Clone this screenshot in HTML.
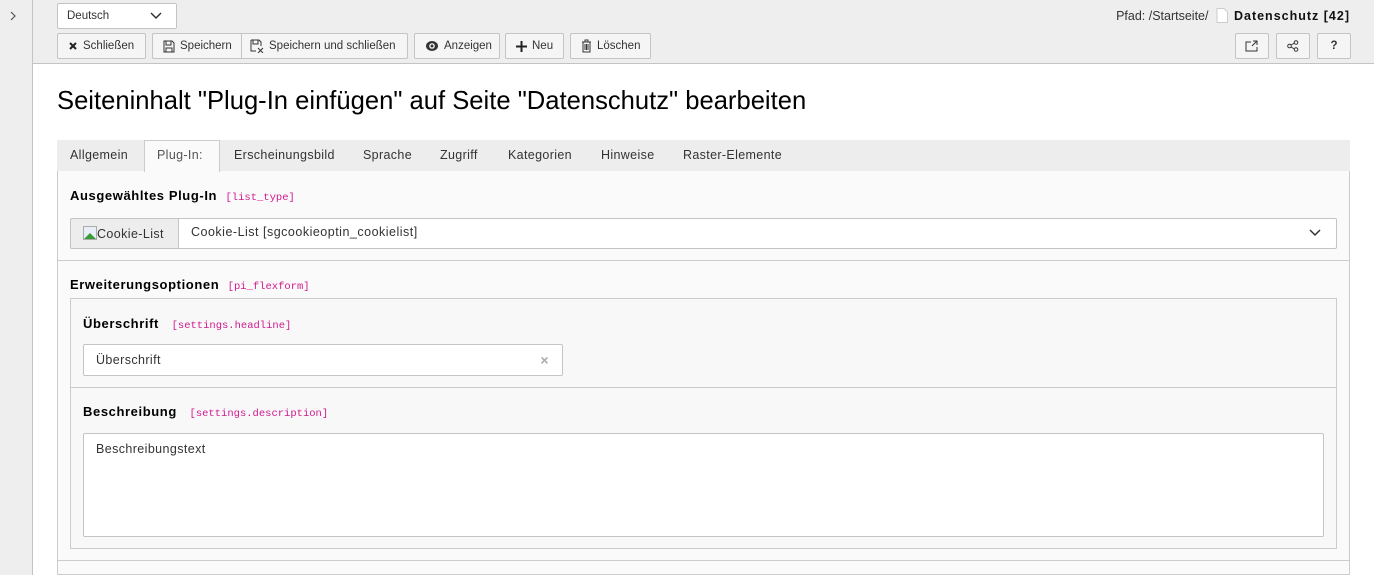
<!DOCTYPE html>
<html><head><meta charset="utf-8"><style>
*{box-sizing:border-box;margin:0;padding:0}
body{width:1374px;height:575px;overflow:hidden;background:#fff;font-family:"Liberation Sans",sans-serif;font-size:12px;color:#333;position:relative}
.a{position:absolute}
.side{left:0;top:0;width:33px;height:575px;background:#eee;border-right:1px solid #c3c3c3}
.top{left:33px;top:0;right:0;height:64px;background:#eee;border-bottom:1px solid #c3c3c3}
.btn{position:absolute;top:33px;height:26px;background:#f5f5f5;border:1px solid #c4c4c4;border-radius:2px;font-size:11.5px;color:#333;display:flex;align-items:center;padding-left:10px;white-space:nowrap}
.btn svg{margin-right:5px}
.mono{font-family:"Liberation Mono",monospace;color:#d1198e;font-size:10.5px;font-weight:normal;letter-spacing:0}
.lbl{position:absolute;font-weight:bold;font-size:13px;letter-spacing:.6px;color:#000}
.tab{position:absolute;top:148px;font-size:12.5px;letter-spacing:.35px;color:#333}
</style></head><body>
<div class="a side"><svg class="a" style="left:9px;top:11px" width="8" height="10"><path d="M2 1l4 4-4 4" fill="none" stroke="#555" stroke-width="1.2"/></svg></div>
<div class="a top"></div>
<div class="a" style="left:57px;top:3px;width:120px;height:26px;background:#fff;border:1px solid #c4c4c4;border-radius:2px;font-size:11.5px;padding:6px 0 0 9px">Deutsch<svg class="a" style="left:92px;top:8px" width="12" height="8"><path d="M1 1l5 5 5-5" fill="none" stroke="#333" stroke-width="1.5"/></svg></div>
<div class="btn" style="left:57px;width:89px"><svg width="10" height="10"><path d="M2 2l6 6M8 2l-6 6" stroke="#222" stroke-width="2"/></svg>Schließen</div>
<div class="btn" style="left:152px;width:90px;border-radius:2px 0 0 2px"><svg width="12" height="13"><path d="M1 1h8l2 2v9H1z M3 1v4h5V1 M3 12V8h6v4" fill="none" stroke="#333"/></svg>Speichern</div>
<div class="btn" style="left:241px;width:167px;border-radius:0 2px 2px 0;padding-left:8px"><svg width="14" height="14"><path d="M1 1h8l2 2v4 M1 1v11h5 M3 1v4h5V1 M8 9l5 5M13 9l-5 5" fill="none" stroke="#333"/></svg>Speichern und schließen</div>
<div class="btn" style="left:414px;width:86px"><svg width="14" height="12"><ellipse cx="7" cy="6" rx="6" ry="5" fill="#333"/><circle cx="7" cy="6" r="2.8" fill="#fff"/><circle cx="7" cy="6" r="1.5" fill="#333"/></svg>Anzeigen</div>
<div class="btn" style="left:505px;width:59px"><svg width="11" height="11"><path d="M5.5 0v11M0 5.5h11" stroke="#222" stroke-width="2"/></svg>Neu</div>
<div class="btn" style="left:570px;width:81px"><svg width="11" height="14"><path d="M1 3h9M4 3V1h3v2M2 3v10h7V3M4 5v6M5.5 5v6M7 5v6" fill="none" stroke="#333"/></svg>Löschen</div>
<div class="a" style="right:24px;top:8px;font-size:12.5px;color:#333">Pfad: /Startseite/ <svg width="12" height="15" style="vertical-align:-3px;margin:0 6px 0 4px"><path d="M1 .5h7l3.5 3.5v10.5H1z" fill="#fff" stroke="#ccc"/></svg><b style="color:#111;letter-spacing:1px">Datenschutz [42]</b></div>
<div class="btn" style="left:1235px;width:34px;padding:0;justify-content:center"><svg width="14" height="12" style="margin:0"><path d="M6 2H1v9h11V7 M8 1h4v4M12 1L7 6" fill="none" stroke="#333"/></svg></div>
<div class="btn" style="left:1276px;width:34px;padding:0;justify-content:center"><svg width="12" height="12" style="margin:0"><circle cx="9" cy="2.5" r="1.8" fill="none" stroke="#333"/><circle cx="2.5" cy="6" r="1.8" fill="none" stroke="#333"/><circle cx="9" cy="9.5" r="1.8" fill="none" stroke="#333"/><path d="M4 5l3.5-2M4 7l3.5 2" stroke="#333"/></svg></div>
<div class="btn" style="left:1317px;width:34px;padding:0;justify-content:center;font-weight:bold">?</div>
<div class="a" style="left:57px;top:87px;font-size:25.6px;color:#000">Seiteninhalt "Plug-In einfügen" auf Seite "Datenschutz" bearbeiten</div>
<div class="a" style="left:57px;top:140px;width:1293px;height:32px;background:#ededed;border-bottom:1px solid #ccc"></div>
<div class="a" style="left:57px;top:171px;width:1293px;height:404px;background:#fafafa;border:1px solid #ccc;border-top:none"></div>
<div class="a" style="left:144px;top:140px;width:76px;height:32px;background:#fafafa;border:1px solid #ccc;border-bottom:none"></div>
<div class="tab" style="left:70px">Allgemein</div>
<div class="tab" style="left:157px;color:#555">Plug-In:</div>
<div class="tab" style="left:234px">Erscheinungsbild</div>
<div class="tab" style="left:363px">Sprache</div>
<div class="tab" style="left:440px">Zugriff</div>
<div class="tab" style="left:508px">Kategorien</div>
<div class="tab" style="left:601px">Hinweise</div>
<div class="tab" style="left:683px">Raster-Elemente</div>
<div class="lbl" style="left:70px;top:188px">Ausgewähltes Plug-In &nbsp;<span class="mono">[list_type]</span></div>
<div class="a" style="left:70px;top:218px;width:1267px;height:31px;background:#fff;border:1px solid #c4c4c4;border-radius:2px"></div>
<div class="a" style="left:70px;top:218px;width:109px;height:31px;background:#ededed;border:1px solid #c4c4c4;border-radius:2px 0 0 2px;font-size:12.5px;letter-spacing:.4px;padding:7px 0 0 12px"><svg width="14" height="14" style="vertical-align:-2px"><rect x=".5" y=".5" width="13" height="13" fill="#e8eef5" stroke="#aaa"/><path d="M1 13L7 7l6 6z" fill="#3a9a3a"/></svg>Cookie-List</div>
<div class="a" style="left:191px;top:225px;font-size:12.5px;letter-spacing:.5px">Cookie-List [sgcookieoptin_cookielist]</div>
<svg class="a" style="left:1309px;top:229px" width="12" height="8"><path d="M1 1l5 5 5-5" fill="none" stroke="#333" stroke-width="1.5"/></svg>
<div class="a" style="left:58px;top:260px;width:1291px;border-top:1px solid #ccc"></div>
<div class="lbl" style="left:70px;top:277px">Erweiterungsoptionen &nbsp;<span class="mono">[pi_flexform]</span></div>
<div class="a" style="left:70px;top:298px;width:1267px;height:251px;border:1px solid #ccc;background:#f8f8f8"></div>
<div class="lbl" style="left:83px;top:316px">Überschrift &nbsp;&nbsp;<span class="mono">[settings.headline]</span></div>
<div class="a" style="left:83px;top:344px;width:480px;height:32px;background:#fff;border:1px solid #c4c4c4;border-radius:2px;font-size:12.5px;letter-spacing:.4px;padding:8px 0 0 12px">Überschrift<span class="a" style="right:13px;top:7px;color:#aaa;font-size:14px;font-weight:bold">×</span></div>
<div class="a" style="left:71px;top:387px;width:1265px;border-top:1px solid #ccc"></div>
<div class="lbl" style="left:83px;top:404px">Beschreibung &nbsp;&nbsp;<span class="mono">[settings.description]</span></div>
<div class="a" style="left:83px;top:433px;width:1241px;height:104px;background:#fff;border:1px solid #c4c4c4;border-radius:2px;font-size:12.5px;letter-spacing:.4px;padding:8px 0 0 12px">Beschreibungstext</div>
<div class="a" style="left:58px;top:560px;width:1291px;border-top:1px solid #ccc"></div>
</body></html>
